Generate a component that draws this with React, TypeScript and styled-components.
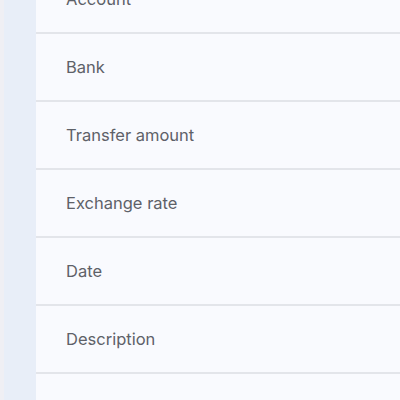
import React from 'react';
import styled, { createGlobalStyle } from 'styled-components';

const GlobalStyle = createGlobalStyle`
  html, body {
    margin: 0;
    padding: 0;
    background: #f9fafe;
    overflow: hidden;
  }
`;

const Page = styled.div`
  display: flex;
  height: 400px;
  overflow: hidden;
  font-family: Inter, 'Noto Sans', sans-serif;
`;

const Rail = styled.div`
  width: 32px;
  flex-shrink: 0;
  background: #e8eef8;
  border-left: 4px solid #efeff4;
`;

const List = styled.ul`
  flex: 1;
  list-style: none;
  margin: -34px 0 0;
  padding: 0;
  background: #f9fafe;
`;

const Row = styled.li`
  display: flex;
  align-items: center;
  height: 66px;
  padding-left: 30px;
  border-bottom: 2px solid #e3e5ea;
  color: #5e6168;
  font-size: 16.5px;
`;

const fields = [
  'Account',
  'Bank',
  'Transfer amount',
  'Exchange rate',
  'Date',
  'Description',
  '',
];

const App = () => {
  return (
    <>
      <GlobalStyle />
      <Page>
        <Rail />
        <List>
          {fields.map((f, i) => (
            <Row key={i}>{f}</Row>
          ))}
        </List>
      </Page>
    </>
  );
};

export default App;
